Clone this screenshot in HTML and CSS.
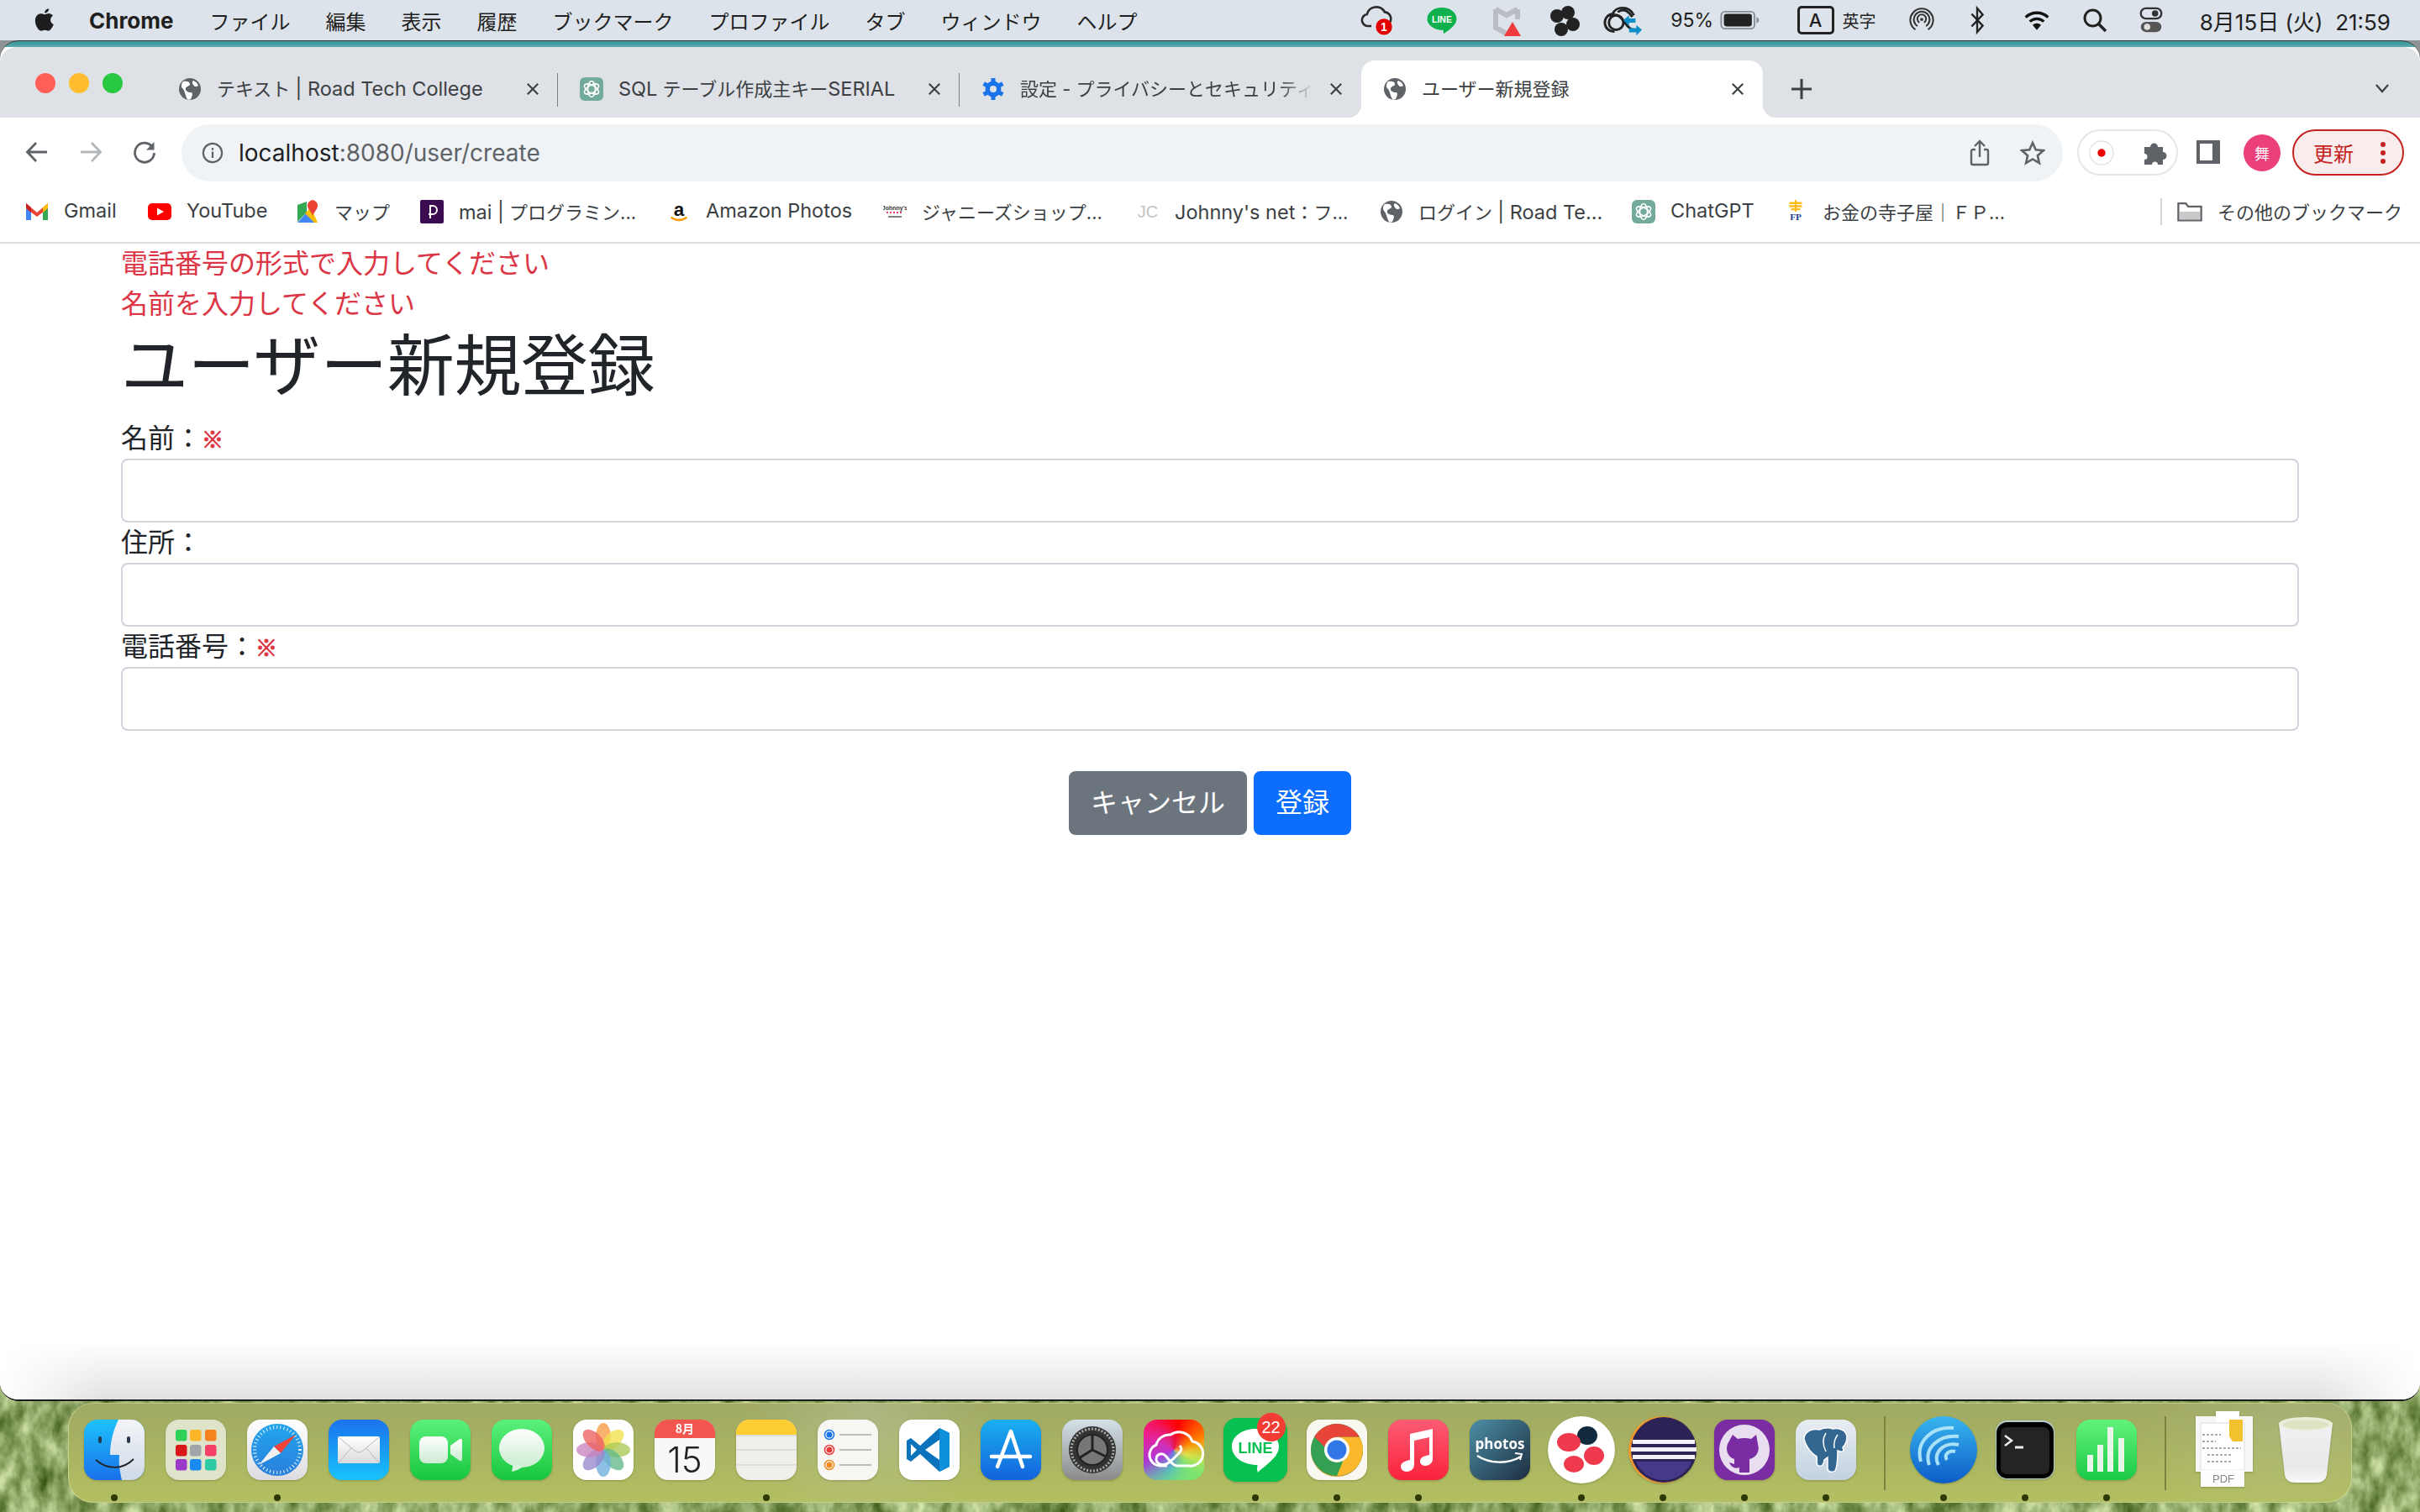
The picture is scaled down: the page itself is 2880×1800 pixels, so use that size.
FILE: index.html
```html
<!DOCTYPE html>
<html lang="ja">
<head>
<meta charset="utf-8">
<title>ユーザー新規登録</title>
<link rel="stylesheet" href="styles.css">
</head>
<body>
<svg class="wall" viewBox="0 0 2880 200"><filter id="grass" x="0" y="0" width="100%" height="100%" color-interpolation-filters="sRGB"><feTurbulence type="fractalNoise" baseFrequency="0.05 0.028" numOctaves="4" seed="11"/><feColorMatrix values="0.800 0 0 0 0.160  0.750 0 0 0 0.280  0.800 0 0 0 0  0 0 0 0 1"/></filter><rect width="2880" height="200" filter="url(#grass)"/></svg>
<header class="menubar">
  <nav class="menu-left">
    <svg class="apple" viewBox="0 0 28 34"><path fill="#1d1d1f" d="M20 1c.3 3-2.600 6.300-5.800 6C13.800 4 16.800 1.200 20 1zM14.300 9c1.500 0 3-1.300 5.600-1.300 2 0 4.300 1 5.800 3.200-5 3-4.200 10 .9 12-1 3-4.300 9.100-7.400 9.100-1.800 0-2.800-1.200-4.800-1.200s-3.200 1.200-4.800 1.200C5.600 32 1 24.500 1 18c0-6.300 4-9.900 7.800-9.900 2.400 0 4 .9 5.500.9z"/></svg>
    <b class="menu-app">Chrome</b>
    <span>ファイル</span><span>編集</span><span>表示</span><span>履歴</span><span>ブックマーク</span><span>プロファイル</span><span>タブ</span><span>ウィンドウ</span><span>ヘルプ</span>
  </nav>
  <div class="menu-right">
    <svg class="mi" viewBox="0 0 50 44"><path fill="none" stroke="#2b2b2b" stroke-width="3" d="M16 30H11a8 8 0 0 1-1-15.900A13 13 0 0 1 34 11a9 9 0 0 1 6 15"/><circle cx="33" cy="31" r="11" fill="#e30000"/><text x="33" y="37" class="mi-one">1</text></svg>
    <svg class="mi" viewBox="0 0 44 44"><path fill="#0fb14c" d="M22 7c10 0 17.500 6 17.500 13.500 0 7-8 12.500-15 17.500l-1-1.500 .5-2.500C13 34 4.500 28 4.500 20.500 4.500 13 12 7 22 7z"/><text x="22" y="25" class="mi-line">LINE</text></svg>
    <svg class="mi" viewBox="0 0 44 44"><path fill="none" stroke="#b9bcc0" stroke-width="6" d="M9 9v22l13 7 M35 9v12M9 9l13 7 13-7"/><path fill="#ef3b3b" d="M29 24l10 17H19z"/></svg>
    <svg class="mi" viewBox="0 0 44 44"><g fill="#222"><circle cx="13" cy="17" r="8"/><circle cx="26" cy="13" r="8"/><circle cx="32" cy="27" r="8"/><circle cx="18" cy="33" r="8"/></g></svg>
    <svg class="mi mi-wide" viewBox="0 0 50 44"><g fill="none" stroke="#222" stroke-width="3"><path d="M14 36a11 11 0 0 1-2-22C15 5 32 3 38 16"/><circle cx="16" cy="25" r="9"/><path d="M8 18c8-6 14 0 18 6s8 10 12 10"/><path d="M18 12c8-6 14 0 18 6"/></g><path fill="#0d8fc7" d="M25 22l7-6v4h8v5h-8v4zM48 34l-7-6v4h-9v5h9v4z"/></svg>
    <span class="mi-pct">95%</span>
    <svg class="mi mi-batt" viewBox="0 0 52 28"><rect x="1.500" y="3" width="43" height="22" rx="5" fill="none" stroke="#8a8d90" stroke-width="2"/><rect x="5" y="6" width="36" height="16" rx="3" fill="#222"/><path d="M47 10l3 2v4l-3 2z" fill="#8a8d90"/></svg>
    <div class="mi-ime"><span class="ime-box">A</span><span class="ime-txt">英字</span></div>
    <svg class="mi mi-small" viewBox="0 0 32 36"><g fill="none" stroke="#333" stroke-width="2.200"><path d="M8 30A14.500 14.500 0 1 1 24 30"/><path d="M10.500 25.500a10 10 0 1 1 11 0"/><path d="M13 21a5.500 5.500 0 1 1 6 0"/></g><circle cx="16" cy="17" r="2" fill="#333"/></svg>
    <svg class="mi mi-small" viewBox="0 0 24 36"><path fill="none" stroke="#222" stroke-width="2.500" d="M5 10l14 15-7 8V3l7 8L5 26"/></svg>
    <svg class="mi mi-small" viewBox="0 0 36 30"><g fill="none" stroke="#111" stroke-width="4"><path d="M2 11a23 23 0 0 1 32 0"/><path d="M8 17a14.500 14.500 0 0 1 20 0"/></g><path d="M18 29l-6-7a8.500 8.500 0 0 1 12 0z" fill="#111"/></svg>
    <svg class="mi mi-small" viewBox="0 0 30 30"><circle cx="12.500" cy="12.500" r="9.500" fill="none" stroke="#222" stroke-width="3"/><path d="M19.500 19.500L28 28" stroke="#222" stroke-width="3.500"/></svg>
    <svg class="mi mi-small" viewBox="0 0 30 36"><rect x="2" y="3" width="26" height="13" rx="6.500" fill="none" stroke="#333" stroke-width="2.500"/><circle cx="20" cy="9.500" r="4" fill="#333"/><rect x="2" y="20" width="26" height="13" rx="6.500" fill="#555"/><circle cx="10" cy="26.500" r="4" fill="#ddd"/></svg>
    <span class="mi-date">8月15日 (火)  21:59</span>
  </div>
</header>

<main class="window">
  <div class="tabstrip">
    <div class="lights"><i class="light red"></i><i class="light amber"></i><i class="light green"></i></div>
    <div class="tab sep">
      <svg class="fav" viewBox="0 0 28 28"><circle cx="14" cy="14" r="13" fill="#5f6368"/><path fill="#fff" d="M6 5c4-1 8 0 8 3s-4 2-5 5 3 5 6 5 2 4 0 8l-3 1C8 23 9 17 5 13 3 11 4 7 6 5zM18 4c3 1 5 3 6 6-2 2-5 1-6-1s-2-3 0-5z"/></svg>
      <span class="tab-title">テキスト <span class="lat">| Road Tech College</span></span>
      <svg class="close" viewBox="0 0 18 18"><path d="M2 2l14 14M16 2L2 16"/></svg>
    </div>
    <div class="tab sep">
      <svg class="fav" viewBox="0 0 28 28"><rect width="28" height="28" rx="6" fill="#74aa9c"/><g fill="none" stroke="#fff" stroke-width="1.600"><ellipse cx="14" cy="14" rx="4.500" ry="9.500"/><ellipse cx="14" cy="14" rx="4.500" ry="9.500" transform="rotate(60 14 14)"/><ellipse cx="14" cy="14" rx="4.500" ry="9.500" transform="rotate(120 14 14)"/></g></svg>
      <span class="tab-title"><span class="lat">SQL</span> テーブル作成主キー<span class="lat">SERIAL</span></span>
      <svg class="close" viewBox="0 0 18 18"><path d="M2 2l14 14M16 2L2 16"/></svg>
    </div>
    <div class="tab">
      <svg class="fav" viewBox="0 0 28 28"><circle cx="14" cy="14" r="6.500" fill="none" stroke="#1a73e8" stroke-width="6"/><g stroke="#1a73e8" stroke-width="5"><path d="M14 1v26M2.700 7.500l22.600 13M25.300 7.500l-22.600 13"/></g><circle cx="14" cy="14" r="4" fill="#dee1e6"/></svg>
      <span class="tab-title fade">設定 - プライバシーとセキュリティ</span>
      <svg class="close" viewBox="0 0 18 18"><path d="M2 2l14 14M16 2L2 16"/></svg>
    </div>
    <div class="tab active">
      <svg class="fav" viewBox="0 0 28 28"><circle cx="14" cy="14" r="13" fill="#5f6368"/><path fill="#fff" d="M6 5c4-1 8 0 8 3s-4 2-5 5 3 5 6 5 2 4 0 8l-3 1C8 23 9 17 5 13 3 11 4 7 6 5zM18 4c3 1 5 3 6 6-2 2-5 1-6-1s-2-3 0-5z"/></svg>
      <span class="tab-title">ユーザー新規登録</span>
      <svg class="close" viewBox="0 0 18 18"><path d="M2 2l14 14M16 2L2 16"/></svg>
    </div>
    <svg class="newtab" viewBox="0 0 24 24"><path d="M12 0v24M0 12h24"/></svg>
    <svg class="tabmenu" viewBox="0 0 18 12"><path d="M1 1l8 9 8-9"/></svg>
  </div>

  <div class="toolbar">
    <svg class="nav" viewBox="0 0 28 28"><path d="M26 14H3M13 3L2.500 14 13 25"/></svg>
    <svg class="nav off" viewBox="0 0 28 28"><path d="M2 14h23M15 3l10.500 11L15 25"/></svg>
    <svg class="nav" viewBox="0 0 28 28"><path d="M24 9A11.500 11.500 0 1 0 25.500 15"/><path class="solid" d="M25.500 2v9.500H16z"/></svg>
    <div class="urlbar">
      <svg class="info" viewBox="0 0 28 28"><circle cx="14" cy="14" r="12"/><path d="M14 12.500v8M14 7.500v3"/></svg>
      <span class="url"><span class="url-host">localhost</span>:8080/user/create</span>
      <svg class="share" viewBox="0 0 24 32"><path d="M7 12H4a2 2 0 0 0-2 2v14a2 2 0 0 0 2 2h16a2 2 0 0 0 2-2V14a2 2 0 0 0-2-2h-3M12 21V2M6 8l6-6 6 6"/></svg>
      <svg class="star" viewBox="0 0 30 30"><path d="M15 3l3.700 8.300 9 .9-6.800 6 2 8.900-7.900-4.600-7.900 4.600 2-8.900-6.800-6 9-.9z"/></svg>
    </div>
    <div class="ext-pill">
      <svg class="ext-rec" viewBox="0 0 32 32"><circle cx="16" cy="16" r="15" fill="#fff" stroke="#e3e3e3" stroke-width="1.500"/><circle cx="16" cy="16" r="5" fill="#ef0000"/></svg>
      <svg class="ext-puz" viewBox="0 0 30 28"><path fill="#5f6368" d="M1 7h7a4.500 4.500 0 1 1 9 0h6v6a4.500 4.500 0 1 1 0 9v6h-6a3.500 3.500 0 0 0-7 0H1v-6a3.500 3.500 0 0 0 0-7z"/></svg>
    </div>
    <div class="sidebar-btn"></div>
    <div class="avatar">舞</div>
    <div class="update"><span>更新</span><svg class="dots" viewBox="0 0 8 28"><circle cx="4" cy="4" r="3"/><circle cx="4" cy="14" r="3"/><circle cx="4" cy="24" r="3"/></svg></div>
  </div>

  <div class="bookmarks">
    <a class="bm"><svg class="bi" viewBox="0 0 28 28"><path fill="#4285f4" d="M1 7v17h6V12z"/><path fill="#34a853" d="M27 7v17h-6V12z"/><path fill="#ea4335" d="M1 4l13 11L27 4v6L14 20 1 10z"/><path fill="#c5221f" d="M1 4v6l6 5V9z"/><path fill="#fbbc04" d="M27 4v6l-6 5V9z"/></svg><span class="lat">Gmail</span></a>
    <a class="bm"><svg class="bi" viewBox="0 0 28 28"><rect x="0" y="4" width="28" height="20" rx="5" fill="#f00"/><path fill="#fff" d="M11 9.500l8 4.500-8 4.500z"/></svg><span class="lat">YouTube</span></a>
    <a class="bm"><svg class="bi" viewBox="0 0 28 28"><path fill="#34a853" d="M2 26V6l11-4v13z"/><path fill="#4285f4" d="M2 27l12-13 10 13z"/><path fill="#fbbc04" d="M11 16L18 9l8 18h-4z"/><path fill="#ea4335" d="M20 0a7 7 0 0 1 6 8c-1 4-4 6-6 11-1-5-5-7-6-11a7 7 0 0 1 6-8z"/></svg><span>マップ</span></a>
    <a class="bm"><svg class="bi" viewBox="0 0 28 28"><rect width="28" height="28" rx="2" fill="#3a0b4f"/><path fill="none" stroke="#fff" stroke-width="2" d="M12 22V7h3a5 5 0 0 1 0 10h-5"/></svg><span><span class="lat">mai |</span> プログラミン...</span></a>
    <a class="bm"><svg class="bi" viewBox="0 0 28 30"><text x="14" y="20" class="bi-a">a</text><path fill="none" stroke="#f90" stroke-width="2.500" d="M4 22c6 5 14 5 20 0"/></svg><span class="lat">Amazon Photos</span></a>
    <a class="bm"><svg class="bi" viewBox="0 0 28 28"><text x="14" y="12" class="bi-j">Johnny's</text><path d="M4 15h20" stroke="#e23b7c" stroke-width="2" stroke-dasharray="2 2"/><path d="M6 20h16" stroke="#555" stroke-width="1.500"/></svg><span>ジャニーズショップ...</span></a>
    <a class="bm"><svg class="bi" viewBox="0 0 28 28"><text x="14" y="21" class="bi-jc">JC</text></svg><span><span class="lat">Johnny's net</span>：フ...</span></a>
    <a class="bm"><svg class="bi" viewBox="0 0 28 28"><circle cx="14" cy="14" r="13" fill="#5f6368"/><path fill="#fff" d="M6 5c4-1 8 0 8 3s-4 2-5 5 3 5 6 5 2 4 0 8l-3 1C8 23 9 17 5 13 3 11 4 7 6 5zM18 4c3 1 5 3 6 6-2 2-5 1-6-1s-2-3 0-5z"/></svg><span>ログイン <span class="lat">| Road Te...</span></span></a>
    <a class="bm"><svg class="bi" viewBox="0 0 28 28"><rect width="28" height="28" rx="6" fill="#74aa9c"/><g fill="none" stroke="#fff" stroke-width="1.600"><ellipse cx="14" cy="14" rx="4.500" ry="9.500"/><ellipse cx="14" cy="14" rx="4.500" ry="9.500" transform="rotate(60 14 14)"/><ellipse cx="14" cy="14" rx="4.500" ry="9.500" transform="rotate(120 14 14)"/></g></svg><span class="lat">ChatGPT</span></a>
    <a class="bm"><svg class="bi" viewBox="0 0 28 30"><path fill="none" stroke="#fbbc1c" stroke-width="2.500" d="M14 0v15M6 4h16M6 8h16M8 12h12"/><text x="14" y="26" class="bi-fp">FP</text></svg><span>お金の寺子屋｜ＦＰ...</span></a>
    <i class="bm-sep"></i>
    <a class="bm more"><svg class="bi bi-folder" viewBox="0 0 32 26"><path fill="#fff" stroke="#5f6368" stroke-width="2.500" d="M1.500 24V2.500H11l3 4h16.500V24z"/><rect x="3" y="13" width="26" height="10" fill="#c9c9c9"/></svg><span>その他のブックマーク</span></a>
  </div>

  <section class="page">
    <div class="container">
      <p class="err">電話番号の形式で入力してください</p>
      <p class="err">名前を入力してください</p>
      <h1>ユーザー新規登録</h1>
      <form class="form">
        <label>名前：<span class="req">※</span></label>
        <input class="control" type="text">
        <label>住所：</label>
        <input class="control" type="text">
        <label>電話番号：<span class="req">※</span></label>
        <input class="control" type="text">
        <div class="actions">
          <a class="btn grey">キャンセル</a>
          <button class="btn blue" type="button">登録</button>
        </div>
      </form>
    </div>
  </section>
</main>

<footer class="dock">
  <div class="di"><svg viewBox="0 0 72 72"><defs><linearGradient id="fa" x1="0" y1="0" x2="0" y2="1"><stop offset="0" stop-color="#1dc2fa"/><stop offset="1" stop-color="#1a70ec"/></linearGradient><linearGradient id="fb" x1="0" y1="0" x2="0" y2="1"><stop offset="0" stop-color="#f3f4f7"/><stop offset="1" stop-color="#cfdae8"/></linearGradient></defs><rect width="72" height="72" rx="16" fill="url(#fa)"/><path fill="url(#fb)" d="M41 0C35 12 31 27 31 42h11c-1 11 1 21 3 30h11a16 16 0 0 0 16-16V16A16 16 0 0 0 56 0z"/><rect x="17" y="20" width="4" height="8" rx="2" fill="#26374d"/><rect x="51" y="20" width="4" height="8" rx="2" fill="#26374d"/><path d="M14 48c14 12 32 12 45-1" fill="none" stroke="#222" stroke-width="1.800"/></svg><i class="dot"></i></div>
  <div class="di"><svg viewBox="0 0 72 72"><rect width="72" height="72" rx="16" fill="#dfe3ca"/><g><rect x="12" y="12" width="13.500" height="13.500" rx="3" fill="#2fd158"/><rect x="29" y="12" width="13.500" height="13.500" rx="3" fill="#fdb62a"/><rect x="47" y="12" width="13.500" height="13.500" rx="3" fill="#f5821f"/><rect x="12" y="30" width="13.500" height="13.500" rx="3" fill="#d81818"/><rect x="29" y="30" width="13.500" height="13.500" rx="3" fill="#9fa5a8"/><rect x="47" y="30" width="13.500" height="13.500" rx="3" fill="#f43f66"/><rect x="12" y="47" width="13.500" height="13.500" rx="3" fill="#9a3ccb"/><rect x="29" y="47" width="13.500" height="13.500" rx="3" fill="#1a8af0"/><rect x="47" y="47" width="13.500" height="13.500" rx="3" fill="#2ecaa4"/></g></svg><i class="dot off"></i></div>
  <div class="di"><svg viewBox="0 0 72 72"><defs><linearGradient id="sa" x1="0" y1="0" x2="0" y2="1"><stop offset="0" stop-color="#fff"/><stop offset="1" stop-color="#dcdce0"/></linearGradient><linearGradient id="sb" x1="0" y1="0" x2="0" y2="1"><stop offset="0" stop-color="#22a5ee"/><stop offset="1" stop-color="#2a7fdb"/></linearGradient></defs><rect width="72" height="72" rx="16" fill="url(#sa)"/><circle cx="36" cy="36" r="31" fill="url(#sb)"/><circle cx="36" cy="36" r="27" fill="none" stroke="#e8f4fc" stroke-width="4" stroke-dasharray="1 3.200"/><path fill="#f04438" d="M58 18L40 40l-8-8z"/><path fill="#f1f1f1" d="M14 54l18-22 8 8z"/></svg><i class="dot"></i></div>
  <div class="di"><svg viewBox="0 0 72 72"><defs><linearGradient id="ma" x1="0" y1="0" x2="0" y2="1"><stop offset="0" stop-color="#1a72ec"/><stop offset="1" stop-color="#19c3fb"/></linearGradient><linearGradient id="mb" x1="0" y1="0" x2="0" y2="1"><stop offset="0" stop-color="#fff"/><stop offset="1" stop-color="#dadada"/></linearGradient></defs><rect width="72" height="72" rx="16" fill="url(#ma)"/><rect x="11" y="20" width="50" height="32" rx="2" fill="url(#mb)"/><path fill="none" stroke="#b9b9b9" stroke-width="1" d="M12 21l19 16q5 4 10 0l19-16M12 51l15-17M60 51L45 34"/></svg><i class="dot off"></i></div>
  <div class="di"><svg viewBox="0 0 72 72"><defs><linearGradient id="ga" x1="0" y1="0" x2="0" y2="1"><stop offset="0" stop-color="#5bf17c"/><stop offset="1" stop-color="#17c63d"/></linearGradient><linearGradient id="gb" x1="0" y1="0" x2="0" y2="1"><stop offset="0" stop-color="#fff"/><stop offset="1" stop-color="#cdebd2"/></linearGradient></defs><rect width="72" height="72" rx="16" fill="url(#ga)"/><rect x="11" y="20" width="34" height="32" rx="8" fill="url(#gb)"/><path fill="url(#gb)" d="M48 31l11-8q3-1 3 2v22q0 3-3 2l-11-8z"/></svg><i class="dot off"></i></div>
  <div class="di"><svg viewBox="0 0 72 72"><defs><linearGradient id="ia" x1="0" y1="0" x2="0" y2="1"><stop offset="0" stop-color="#5bf17c"/><stop offset="1" stop-color="#17c63d"/></linearGradient><linearGradient id="ib" x1="0" y1="0" x2="0" y2="1"><stop offset="0" stop-color="#fff"/><stop offset="1" stop-color="#c9eccf"/></linearGradient></defs><rect width="72" height="72" rx="16" fill="url(#ia)"/><ellipse cx="36" cy="34" rx="27" ry="23" fill="url(#ib)"/><path d="M26 52l-2 10c5-1 10-3 13-6z" fill="#d9f2dc"/></svg><i class="dot off"></i></div>
  <div class="di"><svg viewBox="0 0 72 72"><rect width="72" height="72" rx="16" fill="#fff"/><g class="petals"><ellipse cx="36" cy="20" rx="9" ry="16" fill="#f58f2c"/><ellipse cx="36" cy="20" rx="9" ry="16" fill="#f0dc33" transform="rotate(45 36 36)"/><ellipse cx="36" cy="20" rx="9" ry="16" fill="#9dc23c" transform="rotate(90 36 36)"/><ellipse cx="36" cy="20" rx="9" ry="16" fill="#4fb07a" transform="rotate(135 36 36)"/><ellipse cx="36" cy="20" rx="9" ry="16" fill="#5aa3d8" transform="rotate(180 36 36)"/><ellipse cx="36" cy="20" rx="9" ry="16" fill="#8977c5" transform="rotate(225 36 36)"/><ellipse cx="36" cy="20" rx="9" ry="16" fill="#c272b5" transform="rotate(270 36 36)"/><ellipse cx="36" cy="20" rx="9" ry="16" fill="#ec4a4a" transform="rotate(315 36 36)"/></g></svg><i class="dot off"></i></div>
  <div class="di"><svg viewBox="0 0 72 72"><rect width="72" height="72" rx="16" fill="#f8f8f6"/><path fill="#f2564f" d="M0 22V16A16 16 0 0 1 16 0h40a16 16 0 0 1 16 16v6z"/><text x="36" y="16" class="cal-m">8月</text><text x="36" y="63" class="cal-d">15</text></svg><i class="dot off"></i></div>
  <div class="di"><svg viewBox="0 0 72 72"><rect width="72" height="72" rx="16" fill="#efeee9"/><path fill="#fecd33" d="M0 18V16A16 16 0 0 1 16 0h40a16 16 0 0 1 16 16v2z"/><path d="M0 19h72M0 36h72M0 54h72" stroke="#d9d8d1" stroke-width="1.500"/></svg><i class="dot"></i></div>
  <div class="di"><svg viewBox="0 0 72 72"><rect width="72" height="72" rx="16" fill="#f7f6f3"/><circle cx="14" cy="18" r="5.500" fill="#fff" stroke="#1a73e8" stroke-width="1.500"/><circle cx="14" cy="18" r="3.500" fill="#1a73e8"/><circle cx="14" cy="36" r="5.500" fill="#fff" stroke="#ea3b3b" stroke-width="1.500"/><circle cx="14" cy="36" r="3.500" fill="#ea3b3b"/><circle cx="14" cy="54" r="5.500" fill="#fff" stroke="#ee8a1f" stroke-width="1.500"/><circle cx="14" cy="54" r="3.500" fill="#ee8a1f"/><path d="M26 18h38M26 36h38M26 54h38" stroke="#bdbdbd" stroke-width="2.200"/></svg><i class="dot off"></i></div>
  <div class="di"><svg viewBox="0 0 72 72"><rect width="72" height="72" rx="16" fill="#fff"/><path fill="#0a73bb" d="M48 10L60 16v40L48 62 25 41 14 50l-5-3V25l5-3 11 9z"/><path fill="#fff" d="M48 24L31 36l17 12zM14 29v14l7-7z"/><path fill="#0d8fd9" d="M48 10L60 16v40L48 62z"/></svg><i class="dot off"></i></div>
  <div class="di"><svg viewBox="0 0 72 72"><defs><linearGradient id="aa" x1="0" y1="0" x2="0" y2="1"><stop offset="0" stop-color="#19b0f0"/><stop offset="1" stop-color="#1462dc"/></linearGradient></defs><rect width="72" height="72" rx="16" fill="url(#aa)"/><g stroke="#fff" stroke-width="4.500" stroke-linecap="round"><path d="M36 14L20 56M36 14l14 42M13 44h46"/></g></svg><i class="dot off"></i></div>
  <div class="di"><svg viewBox="0 0 72 72"><defs><linearGradient id="pa" x1="0" y1="0" x2="0" y2="1"><stop offset="0" stop-color="#d3e1e8"/><stop offset="1" stop-color="#8a8a8a"/></linearGradient></defs><rect width="72" height="72" rx="16" fill="url(#pa)"/><circle cx="36" cy="36" r="28" fill="#333"/><circle cx="36" cy="36" r="25" fill="none" stroke="#a9a9a9" stroke-width="3" stroke-dasharray="2 2"/><circle cx="36" cy="36" r="18" fill="#777" stroke="#222" stroke-width="2"/><path d="M36 36V18M36 36l16 8M36 36L20 46" stroke="#222" stroke-width="3"/></svg><i class="dot off"></i></div>
  <div class="di"><div class="cc-bg"><svg viewBox="0 0 72 72"><g fill="none" stroke="#fff" stroke-width="3"><path d="M28 55H19a13 13 0 0 1-4-25 16 16 0 0 1 17-12 17 17 0 0 1 26 8 14 14 0 0 1-4 29H40c-6 0-10-8-14-12-4-4-11-2-11 4s7 8 12 6 12-10 16-14c3-3 2-6 0-8"/></g></svg></div><i class="dot off"></i></div>
  <div class="di"><svg class="di-line" viewBox="0 0 76 76"><rect width="76" height="76" rx="16" fill="#06c152"/><path fill="#fff" d="M38 13c17 0 28 10 28 21 0 13-16 22-25 31l-1-4 .5-5C24 56 10 47 10 34c0-11 11-21 28-21z"/><text x="38" y="42" class="line-t">LINE</text></svg><span class="badge">22</span><i class="dot"></i></div>
  <div class="di"><svg viewBox="0 0 72 72"><rect width="72" height="72" rx="16" fill="#f8f7f0"/><circle cx="36" cy="37" r="31" fill="#d89a2c"/><circle cx="36" cy="36" r="31" fill="#34a053"/><path fill="#fbb82c" d="M62.800 20.500A31 31 0 0 1 36 67L45 45 36 20.500z"/><path fill="#e8453a" d="M9.200 20.500A31 31 0 0 1 62.800 20.500H36L27 38z"/><circle cx="36" cy="36" r="15" fill="#fff"/><circle cx="36" cy="36" r="11.500" fill="#3177e8"/></svg><i class="dot"></i></div>
  <div class="di"><svg viewBox="0 0 72 72"><defs><linearGradient id="ua" x1="0" y1="0" x2="0" y2="1"><stop offset="0" stop-color="#fb5c74"/><stop offset="1" stop-color="#fa233b"/></linearGradient></defs><rect width="72" height="72" rx="16" fill="url(#ua)"/><path fill="#fff" d="M26 17l27-6v36c0 5-5 8-9 8s-6-3-6-5c0-4 3-6 7-7l4-1V21l-18 4v29c0 5-5 8-9 8s-7-3-7-6c0-4 4-6 7-7l4-1z"/></svg><i class="dot"></i></div>
  <div class="di"><svg viewBox="0 0 72 72"><defs><linearGradient id="za" x1="0" y1="0" x2="1" y2="1"><stop offset="0" stop-color="#4c8fa6"/><stop offset="1" stop-color="#1e2e41"/></linearGradient></defs><rect width="72" height="72" rx="16" fill="url(#za)"/><text x="36" y="35" class="az-t">photos</text><path d="M9 43c15 10 37 10 52 1" fill="none" stroke="#fff" stroke-width="2.500"/><path d="M54 40l8 1-2 7" fill="none" stroke="#fff" stroke-width="2"/></svg><i class="dot off"></i></div>
  <div class="di"><svg class="di-big" viewBox="0 0 80 80"><circle cx="40" cy="40" r="40" fill="#fff"/><ellipse cx="47" cy="23" rx="12" ry="11" fill="#122a3e"/><ellipse cx="25" cy="31" rx="14" ry="11" fill="#ef3a4e"/><ellipse cx="55" cy="47" rx="12" ry="11" fill="#ef3a4e"/><ellipse cx="31" cy="57" rx="12" ry="10" fill="#ef3a4e"/></svg><i class="dot"></i></div>
  <div class="di"><svg class="di-big" viewBox="0 0 80 80"><circle cx="39" cy="40" r="40" fill="#f29a2e"/><circle cx="41" cy="40" r="39" fill="#2c2255"/><path fill="#453a8a" d="M8 54h66c-6 15-20 22-33 22S14 69 8 54z"/><path fill="#f2f0f8" d="M4 28h74v5H4zM2 37h78v5H2zM4 46h74v5H4z"/></svg><i class="dot"></i></div>
  <div class="di"><svg viewBox="0 0 72 72"><rect width="72" height="72" rx="16" fill="#7a2da2"/><circle cx="36" cy="36" r="30" fill="#e9def0"/><path fill="#7a2da2" d="M22 18l6 5q8-2 16 0l6-5 2 11c3 9-3 17-10 18v16h-12v-6c-6 2-10-1-12-6l6 2v-6c-7-2-11-10-8-18z"/></svg><i class="dot"></i></div>
  <div class="di"><svg viewBox="0 0 72 72"><defs><linearGradient id="ea" x1="0" y1="0" x2="0" y2="1"><stop offset="0" stop-color="#e8edf2"/><stop offset="1" stop-color="#c3d2e0"/></linearGradient></defs><rect width="72" height="72" rx="16" fill="url(#ea)"/><path fill="#336791" stroke="#fff" stroke-width="1.500" d="M10 23c0-8 8-13 18-11 5-2 12-3 16-1 8-2 17 2 17 10 0 5-2 9-5 12l1 4c-2 2-5 1-7 0 0 8 0 18-3 24-3 2-8 2-9-2v-14l-4 3c-1 7-4 9-8 6-2-2 0-6-1-10-5-3-13-11-15-21z"/><path d="M36 16c-4 6-4 14 0 22M50 18c-3 4-5 10-4 16" fill="none" stroke="#fff" stroke-width="1.500"/></svg><i class="dot"></i></div>
  <i class="dock-sep"></i>
  <div class="di"><svg class="di-big" viewBox="0 0 80 80"><defs><linearGradient id="wa" x1="0" y1="0" x2="0" y2="1"><stop offset="0" stop-color="#38b6ef"/><stop offset="1" stop-color="#0d5cc7"/></linearGradient></defs><circle cx="40" cy="40" r="40" fill="url(#wa)"/><g fill="none" stroke="#a9e2f7" stroke-width="4"><path d="M13 54C6 30 26 12 52 14"/><path d="M23 58C16 38 34 22 58 24"/><path d="M34 58C26 44 40 30 58 34"/><path d="M44 52c-4-6 2-12 10-10"/></g></svg><i class="dot"></i></div>
  <div class="di"><svg viewBox="0 0 72 72"><rect x="1" y="1" width="70" height="70" rx="14" fill="#b7cdd0"/><rect x="2" y="3" width="68" height="67" rx="13" fill="#000"/><rect x="7" y="9" width="58" height="56" rx="7" fill="#242424"/><path d="M12 19l8 6-8 6" fill="none" stroke="#eee" stroke-width="2.500"/><path d="M24 33h10" stroke="#eee" stroke-width="3"/></svg><i class="dot"></i></div>
  <div class="di"><svg viewBox="0 0 72 72"><defs><linearGradient id="na" x1="0" y1="0" x2="0" y2="1"><stop offset="0" stop-color="#62f27c"/><stop offset="1" stop-color="#1ac947"/></linearGradient></defs><rect width="72" height="72" rx="16" fill="url(#na)"/><g fill="#e8f5e8"><rect x="13" y="42" width="7" height="20"/><rect x="25" y="30" width="7" height="32"/><rect x="37" y="9" width="7" height="53"/><rect x="50" y="22" width="7" height="40"/></g></svg><i class="dot"></i></div>
  <i class="dock-sep"></i>
  <div class="di"><svg class="di-big" viewBox="0 0 80 80"><rect x="6" y="0" width="68" height="66" fill="#f7f7f7"/><path fill="#fff" d="M30 -6h28v14h-28z"/><rect x="12" y="8" width="52" height="56" fill="#fff" stroke="#ddd"/><path fill="#f2c12e" d="M46 4h16v26h-12l-4-6z"/><path d="M14 22h22M14 30h16M14 38h46M20 46h30M20 54h30" stroke="#aaa" stroke-width="2" stroke-dasharray="3 2"/><rect x="12" y="64" width="52" height="20" fill="#fdfdfd"/><text x="39" y="79" class="pdf-t">PDF</text></svg><i class="dot off"></i></div>
  <div class="di"><svg class="di-big" viewBox="0 0 80 80"><defs><linearGradient id="ta" x1="0" y1="0" x2="0" y2="1"><stop offset="0" stop-color="#f0f1f3"/><stop offset=".75" stop-color="#e6e8ea"/><stop offset="1" stop-color="#fafafa"/></linearGradient></defs><path fill="url(#ta)" d="M8 8h64l-7 62q-2 9-12 9H27q-10 0-12-9z"/><ellipse cx="40" cy="9" rx="32" ry="8" fill="#ebedd8"/><ellipse cx="40" cy="10" rx="27" ry="5.500" fill="#dfe2c4"/></svg><i class="dot off"></i></div>
</footer>
</body>
</html>
```

FILE: styles.css
```css
* { box-sizing: border-box; }
html, body { margin: 0; padding: 0; }
body {
  width: 2880px;
  height: 1800px;
  overflow: hidden;
  position: relative;
  display: flex;
  flex-direction: column;
  font-family: Inter, "Liberation Sans", "Noto Sans CJK JP", sans-serif;
  background: #8f9292;
}
.wall { position: absolute; left: 0; top: 1600px; width: 2880px; height: 200px; z-index: -1; }

/* menu bar */
.menubar {
  height: 48px;
  flex: none;
  background: #dde3ea;
  display: grid;
  grid-template-columns: 1602px 1fr;
  align-items: center;
  color: #1f1f1f;
  font-size: 24px;
}
.menu-left { display: flex; align-items: center; gap: 42px; padding-left: 41px; }
.apple { width: 24px; height: 32px; margin-right: -1px; flex: none; }
.menu-app { font-size: 26px; font-weight: 700; margin-right: 1px; }
.menu-right {
  display: grid;
  grid-template-columns: 76px 76px 78px 60px 80px 70px 58px 171px 32px 100px 42px 96px 38px 1fr;
  align-items: center;
  justify-items: center;
  height: 48px;
}
.mi { width: 44px; height: 44px; }
.mi-wide { width: 48px; }
.mi-small { width: 30px; height: 34px; }
.mi-batt { width: 48px; height: 28px; }
.mi-pct { justify-self: end; padding-right: 3px; font-size: 23px; }
.mi-one { font: 700 16px "Liberation Sans", sans-serif; fill: #fff; text-anchor: middle; }
.mi-line { font: 700 10.500px "Liberation Sans", sans-serif; fill: #fff; text-anchor: middle; }
.mi-ime { display: flex; align-items: center; gap: 10px; }
.ime-box { width: 44px; height: 34px; border: 3px solid #222; border-radius: 5px; display: flex; align-items: center; justify-content: center; font-size: 22px; font-weight: 500; }
.ime-txt { font-size: 20px; }
.mi-date { justify-self: end; padding-right: 35px; font-size: 26px; white-space: pre; }

/* browser window */
.window {
  height: 1620px;
  flex: none;
  display: flex;
  flex-direction: column;
  border-top: 1px solid #333;
  border-bottom: 2px solid #1a1a1a;
  padding-top: 7px;
  border-radius: 22px;
  overflow: hidden;
  background: linear-gradient(#3f9a9f 0 3px, #62aeb1 7px, #fff 7px);
}
.tabstrip {
  height: 84px;
  flex: none;
  background: #dee1e6;
  border-radius: 20px 20px 0 0;
  display: flex;
  padding-top: 16px;
  color: #3c4043;
  font-size: 22px;
}
.lat { font-size: 23.500px; }
.lights { width: 186px; flex: none; display: flex; gap: 16px; padding: 15px 0 0 42px; }
.light { width: 24px; height: 24px; border-radius: 50%; }
.light.red { background: #ff5f57; }
.light.amber { background: #febc2e; }
.light.green { background: #28c840; }

.tab { width: 478px; height: 68px; flex: none; display: flex; align-items: center; gap: 18px; padding: 0 22px 0 26px; position: relative; }
.tab.sep::after { content: ""; position: absolute; right: 0; top: 15px; width: 1px; height: 40px; background: #7d8085; }
.tab.active { background: #fff; border-radius: 16px 16px 0 0; }
.tab.active::before,
.tab.active::after { content: ""; position: absolute; bottom: 0; width: 16px; height: 16px; }
.tab.active::before { left: -16px; background: radial-gradient(circle at 0 0, transparent 16px, #fff 16.500px); }
.tab.active::after { right: -16px; background: radial-gradient(circle at 100% 0, transparent 16px, #fff 16.500px); }
.fav { width: 28px; height: 28px; flex: none; }
.tab-title { flex: 1; min-width: 0; white-space: nowrap; overflow: hidden; padding-bottom: 4px; }
.tab-title .lat { display: inline-block; }
.tab-title.fade { -webkit-mask-image: linear-gradient(to right, #000 88%, transparent); mask-image: linear-gradient(to right, #000 88%, transparent); }
.close { width: 16px; height: 16px; flex: none; fill: none; stroke: #3c4043; stroke-width: 2.400; }
.newtab { width: 24px; height: 24px; flex: none; margin: 22px 0 0 34px; fill: none; stroke: #3c4043; stroke-width: 3; }
.tabmenu { width: 16px; height: 11px; flex: none; margin: 28px 37px 0 auto; fill: none; stroke: #3c4043; stroke-width: 2.400; }

.toolbar {
  height: 76px;
  flex: none;
  background: #fff;
  display: flex;
  align-items: flex-start;
  padding: 8px 0 0 30px;
}
.nav { width: 28px; height: 28px; flex: none; margin: 19px 36px 0 0; fill: none; stroke: #5f6368; stroke-width: 2.800; }
.nav.off { stroke: #b4b7ba; }
.nav .solid { fill: #5f6368; stroke: none; }
.nav:nth-of-type(3) { margin-right: 30px; }
.urlbar {
  width: 2239px;
  height: 68px;
  flex: none;
  border-radius: 34px;
  background: #eff3f5;
  display: flex;
  align-items: center;
  padding: 0 21px 0 24px;
}
.info { width: 26px; height: 26px; flex: none; fill: none; stroke: #5f6368; stroke-width: 2.400; margin-right: 18px; }
.url { flex: 1; font-size: 28px; color: #5f6368; }
.url-host { color: #202124; }
.share { width: 24px; height: 32px; flex: none; fill: none; stroke: #5f6368; stroke-width: 2.400; margin-right: 36px; }
.star { width: 30px; height: 30px; flex: none; fill: none; stroke: #5f6368; stroke-width: 2.600; }
.ext-pill { width: 120px; height: 55px; flex: none; margin: 6px 0 0 17px; border: 2px solid #e6e6e6; border-radius: 28px; display: flex; align-items: center; justify-content: space-between; padding: 0 9px 0 12px; }
.ext-rec { width: 30px; height: 30px; }
.ext-puz { width: 30px; height: 28px; }
.sidebar-btn { width: 28px; height: 28px; flex: none; margin: 19px 0 0 22px; border: 4px solid #5f6368; border-right-width: 9px; }
.avatar { width: 44px; height: 44px; flex: none; margin: 12px 0 0 28px; border-radius: 50%; background: #ec407a; color: #fff; font-size: 18px; display: flex; align-items: center; justify-content: center; }
.update { width: 133px; height: 55px; flex: none; margin: 6px 0 0 14px; border: 2px solid #c5221f; border-radius: 28px; background: #f9ecec; color: #c5221f; font-size: 24px; display: flex; align-items: center; justify-content: space-between; padding: 0 19px 0 23px; }
.dots { width: 8px; height: 28px; fill: #c5221f; }

.bookmarks {
  height: 74px;
  flex: none;
  background: #fff;
  border-bottom: 2px solid #dcdee0;
  display: grid;
  grid-template-columns: 146px 176px 148px 294px 257px 301px 290px 300px 181px 448px 2px 307px;
  align-items: center;
  padding-left: 30px;
  color: #3c4043;
  font-size: 22px;
  white-space: nowrap;
}
.bookmarks .lat { font-size: 23.500px; }
.bm { display: flex; align-items: center; gap: 18px; }
.bm > span { padding-bottom: 3px; }
.bi { width: 28px; height: 28px; flex: none; }
.bi-folder { width: 30px; height: 26px; }
.bm-sep { height: 32px; width: 2px; background: #d2d4d6; }
.bm.more { padding-left: 18px; }
.bi-a { font: 700 24px "Liberation Sans", sans-serif; fill: #111; text-anchor: middle; }
.bi-j { font: 700 7px "Liberation Sans", sans-serif; fill: #333; text-anchor: middle; }
.bi-jc { font: 400 20px "Liberation Sans", sans-serif; fill: #c4c4c4; text-anchor: middle; }
.bi-fp { font: 700 12px "Liberation Serif", serif; fill: #1d3a94; text-anchor: middle; }

/* page */
.page {
  flex: 1;
  min-height: 0;
  background: #fff;
  position: relative;
  color: #212529;
  font-family: "Liberation Sans", "Noto Sans CJK JP", sans-serif;
  font-size: 32px;
  line-height: 48px;
}
.page::after {
  content: "";
  position: absolute;
  left: 0; right: 0; bottom: 0;
  height: 70px;
  background: linear-gradient(transparent, #e2e2e2);
  -webkit-mask-image: linear-gradient(to right, transparent, #000 120px, #000 2760px, transparent);
  mask-image: linear-gradient(to right, transparent, #000 120px, #000 2760px, transparent);
}
.container { padding: 0 144px; }
.err { margin: 0; color: #dc3545; }
h1 { margin: 0 0 16px; padding-top: 3px; height: 96px; font-size: 80px; line-height: 96px; font-weight: 400; letter-spacing: -.4px; }
.form { display: flex; flex-direction: column; }
label { height: 48px; }
.req { color: #dc3545; font-family: "Noto Sans CJK JP", sans-serif; font-size: 26px; font-weight: 900; -webkit-text-stroke: 1px #dc3545; }
.control { display: block; width: 100%; height: 76px; border: 2px solid #ced4da; border-radius: 8px; background: #fff; }
.actions { display: flex; justify-content: center; gap: 8px; margin-top: 48px; }
.btn { height: 76px; padding: 0 24px; border: 2px solid; border-radius: 8px; color: #fff; font: inherit; display: flex; align-items: center; }
.btn.grey { background: #6c757d; border-color: #6c757d; }
.btn.blue { background: #0d6efd; border-color: #0d6efd; }

/* dock */
.dock {
  width: 2718px;
  height: 119px;
  flex: none;
  margin: 2px 0 0 81px;
  padding: 19px 0 0 5.500px;
  display: flex;
  align-items: flex-start;
  border-radius: 30px;
  border: 1px solid rgba(225,232,170,.55);
  border-top-color: rgba(200,205,150,.6);
  background:
    radial-gradient(ellipse 150px 130px at 950px 20px, rgba(190,195,170,.45), transparent),
    radial-gradient(ellipse 170px 130px at 2640px 30px, rgba(190,195,170,.25), transparent),
    linear-gradient(#a0a963, #b3bf61);
  font-family: "Liberation Sans", sans-serif;
}
.di { width: 97px; flex: none; position: relative; display: flex; flex-direction: column; align-items: center; }
.di svg { width: 72px; height: 72px; display: block; overflow: visible; filter: drop-shadow(0 1px 1px rgba(60,60,20,.3)); }
.di svg.di-big { width: 80px; height: 80px; margin: -4px 0; }
.di svg.di-line { width: 76px; height: 76px; margin: -2px 0; }
.dot { width: 8px; height: 8px; margin-top: 17px; border-radius: 50%; background: #2d3a08; }
.dot.off { visibility: hidden; }
.dock-sep { width: 43px; flex: none; height: 88px; margin-top: -4px; background: linear-gradient(#7c8440, #7c8440) center / 2px 100% no-repeat; }
.cc-bg { width: 72px; height: 72px; border-radius: 16px; background: radial-gradient(circle at 35% 45%, rgba(190,60,210,.6), transparent 45%), linear-gradient(160deg, transparent 50%, rgba(120,230,110,.95) 95%), conic-gradient(from 300deg at 50% 50%, #ee1f8d, #f00 70deg, #ff8a00 130deg, #ffe23a 170deg, #8ee070 200deg, #3a9cff 250deg, #a238e0 300deg, #ee1f8d); }
.cc-bg svg { filter: none; }
.badge { position: absolute; top: -8px; left: 50px; width: 34px; height: 34px; border-radius: 50%; background: #f23c34; color: #fff; font-size: 20px; line-height: 34px; text-align: center; }
.petals { mix-blend-mode: multiply; opacity: .88; }
.petals ellipse { opacity: .78; }
.cal-m { font: 700 14px "Noto Sans CJK JP", sans-serif; fill: #fff; text-anchor: middle; }
.cal-d { font: 300 42px "Inter", sans-serif; fill: #222; text-anchor: middle; }
.line-t { font: 700 18px "Liberation Sans", sans-serif; fill: #06c152; text-anchor: middle; }
.az-t { font: 700 17px "Open Sans", sans-serif; fill: #fff; text-anchor: middle; }
.pdf-t { font: 400 13px "Liberation Sans", sans-serif; fill: #888; text-anchor: middle; }
```
